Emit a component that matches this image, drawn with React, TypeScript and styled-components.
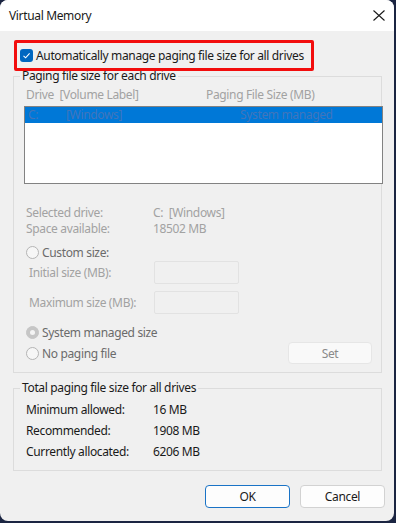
import styled, { createGlobalStyle } from "styled-components";

const GlobalStyle = createGlobalStyle`
  html, body {
    margin: 0;
    padding: 0;
    background: #1b2542;
  }
  body {
    font-family: "Noto Sans", "Open Sans", sans-serif;
    font-size: 12px;
    letter-spacing: -0.35px;
    white-space: nowrap;
  }
`;

const Window = styled.div`
  width: 394px;
  height: 521px;
  background: #f0f0f0;
  border-radius: 8px;
  overflow: hidden;
  display: flex;
  flex-direction: column;
  color: #1a1a1a;
`;

const TitleBar = styled.div`
  height: 31px;
  background: #ffffff;
  display: flex;
  align-items: center;
  justify-content: space-between;
  padding: 0 8px 0 9px;
  flex-shrink: 0;
`;

const Title = styled.span`
  font-size: 12px;
  color: #1a1a1a;
`;

const CloseBtn = styled.div`
  width: 14px;
  height: 14px;
  display: flex;
  align-items: center;
  justify-content: center;
  margin-top: -1px;
`;

const Body = styled.div`
  display: flex;
  flex-direction: column;
  padding: 9px 12px 0 13px;
`;

const Highlight = styled.div`
  width: 291px;
  height: 25px;
  margin-left: 1px;
  border: 3px solid #f20d0d;
  border-radius: 2px;
  display: flex;
  align-items: center;
  padding-left: 3px;
  gap: 3px;
  position: relative;
  z-index: 1;
`;

const CheckBox = styled.div`
  width: 13px;
  height: 13px;
  border-radius: 3px;
  background: #0067c0;
  display: flex;
  align-items: center;
  justify-content: center;
`;

const Group = styled.fieldset<{ $top?: number }>`
  margin: ${(p) => p.$top ?? 0}px 0 0 0;
  border: 1px solid #dcdcdc;
  padding: 0 9px 8px 12px;
  min-width: 0;
  display: flex;
  flex-direction: column;
`;

const Legend = styled.legend`
  padding: 0 2px;
  margin-left: -6px;
  line-height: 16px;
  color: #1a1a1a;
`;

const ListHeader = styled.div`
  display: grid;
  grid-template-columns: 180px 1fr;
  margin-top: 3px;
  line-height: 16px;
  color: #a2a2a2;
`;

const ListBox = styled.div`
  margin: 3px -11px 0 -2px;
  height: 76px;
  background: #ffffff;
  border: 1px solid #828282;
`;

const ListRow = styled.div`
  height: 16px;
  background: #0078d7;
  display: grid;
  grid-template-columns: 38px 174px 1fr;
  padding-left: 3px;
  line-height: 16px;
  color: #4175bb;
`;

const InfoGrid = styled.div<{ $top: number; $row: number }>`
  display: grid;
  grid-template-columns: 127px 1fr;
  grid-auto-rows: ${(p) => p.$row}px;
  align-items: center;
  margin-top: ${(p) => p.$top}px;
`;

const InfoCell = styled.span<{ $dim?: boolean }>`
  color: ${(p) => (p.$dim ? "#a2a2a2" : "#1a1a1a")};
`;

const RadioRow = styled.div<{ $top: number }>`
  display: flex;
  align-items: center;
  gap: 3px;
  margin-top: ${(p) => p.$top}px;
  height: 16px;
  color: #6b6b6b;
`;

const Radio = styled.div<{ $checked?: boolean }>`
  width: 11px;
  height: 11px;
  border-radius: 50%;
  border: 1px solid ${(p) => (p.$checked ? "#c6c6c6" : "#b4b4b4")};
  background: ${(p) => (p.$checked ? "#c6c6c6" : "#f6f6f6")};
  display: flex;
  align-items: center;
  justify-content: center;
  &::after {
    content: "";
    display: ${(p) => (p.$checked ? "block" : "none")};
    width: 5px;
    height: 5px;
    border-radius: 50%;
    background: #f4f4f4;
  }
`;

const FieldRow = styled.div<{ $top: number }>`
  display: grid;
  grid-template-columns: 125px 85px;
  align-items: center;
  margin-top: ${(p) => p.$top}px;
  padding-left: 3px;
  height: 23px;
  color: #a2a2a2;
`;

const Input = styled.div`
  height: 21px;
  border: 1px solid #e2e2e2;
  border-radius: 2px;
  background: #f0f0f0;
`;

const LastRow = styled.div`
  display: flex;
  align-items: center;
  justify-content: space-between;
  height: 22px;
  margin-top: 2px;
`;

const Button = styled.div<{ $primary?: boolean; $disabled?: boolean }>`
  width: ${(p) => (p.$disabled ? 82 : 83)}px;
  height: ${(p) => (p.$disabled ? 20 : 21)}px;
  border: 1px solid ${(p) => (p.$primary ? "#1a73c6" : p.$disabled ? "#e6e6e6" : "#d2d2d2")};
  border-radius: 4px;
  background: ${(p) => (p.$disabled ? "#f9f9f9" : "#fdfdfd")};
  display: flex;
  align-items: center;
  justify-content: center;
  color: ${(p) => (p.$disabled ? "#8a8a8a" : "#1a1a1a")};
`;

const ButtonBar = styled.div`
  display: flex;
  justify-content: flex-end;
  gap: 10px;
  margin: 14px -3px 0 0;
`;

export default function App() {
  return (
    <>
      <GlobalStyle />
      <Window>
        <TitleBar>
          <Title>Virtual Memory</Title>
          <CloseBtn>
            <svg width="12" height="11" viewBox="0 0 12 11">
              <path d="M0.5 0.5 L11.5 10.5 M11.5 0.5 L0.5 10.5" stroke="#1a1a1a" strokeWidth="1.1" />
            </svg>
          </CloseBtn>
        </TitleBar>
        <Body>
          <Highlight>
            <CheckBox>
              <svg width="9" height="9" viewBox="0 0 9 9">
                <path d="M1.5 4.8 L3.6 6.8 L7.6 2.3" fill="none" stroke="#ffffff" strokeWidth="1.1" />
              </svg>
            </CheckBox>
            <span>Automatically manage paging file size for all drives</span>
          </Highlight>

          <Group $top={-3}>
            <Legend>Paging file size for each drive</Legend>
            <ListHeader>
              <span>Drive&nbsp;&nbsp;[Volume Label]</span>
              <span>Paging File Size (MB)</span>
            </ListHeader>
            <ListBox>
              <ListRow>
                <span>C:</span>
                <span>[Windows]</span>
                <span>System managed</span>
              </ListRow>
            </ListBox>
            <InfoGrid $top={20} $row={16}>
              <InfoCell $dim>Selected drive:</InfoCell>
              <InfoCell $dim>C:&nbsp;&nbsp;[Windows]</InfoCell>
              <InfoCell $dim>Space available:</InfoCell>
              <InfoCell $dim>18502 MB</InfoCell>
            </InfoGrid>
            <RadioRow $top={8}>
              <Radio />
              <span>Custom size:</span>
            </RadioRow>
            <FieldRow $top={1}>
              <span>Initial size (MB):</span>
              <Input />
            </FieldRow>
            <FieldRow $top={7}>
              <span>Maximum size (MB):</span>
              <Input />
            </FieldRow>
            <RadioRow $top={10}>
              <Radio $checked />
              <span>System managed size</span>
            </RadioRow>
            <LastRow>
              <RadioRow $top={0}>
                <Radio />
                <span>No paging file</span>
              </RadioRow>
              <Button $disabled>Set</Button>
            </LastRow>
          </Group>

          <Group $top={7}>
            <Legend>Total paging file size for all drives</Legend>
            <InfoGrid $top={3} $row={21}>
              <InfoCell>Minimum allowed:</InfoCell>
              <InfoCell>16 MB</InfoCell>
              <InfoCell>Recommended:</InfoCell>
              <InfoCell>1908 MB</InfoCell>
              <InfoCell>Currently allocated:</InfoCell>
              <InfoCell>6206 MB</InfoCell>
            </InfoGrid>
          </Group>

          <ButtonBar>
            <Button $primary>OK</Button>
            <Button>Cancel</Button>
          </ButtonBar>
        </Body>
      </Window>
    </>
  );
}
